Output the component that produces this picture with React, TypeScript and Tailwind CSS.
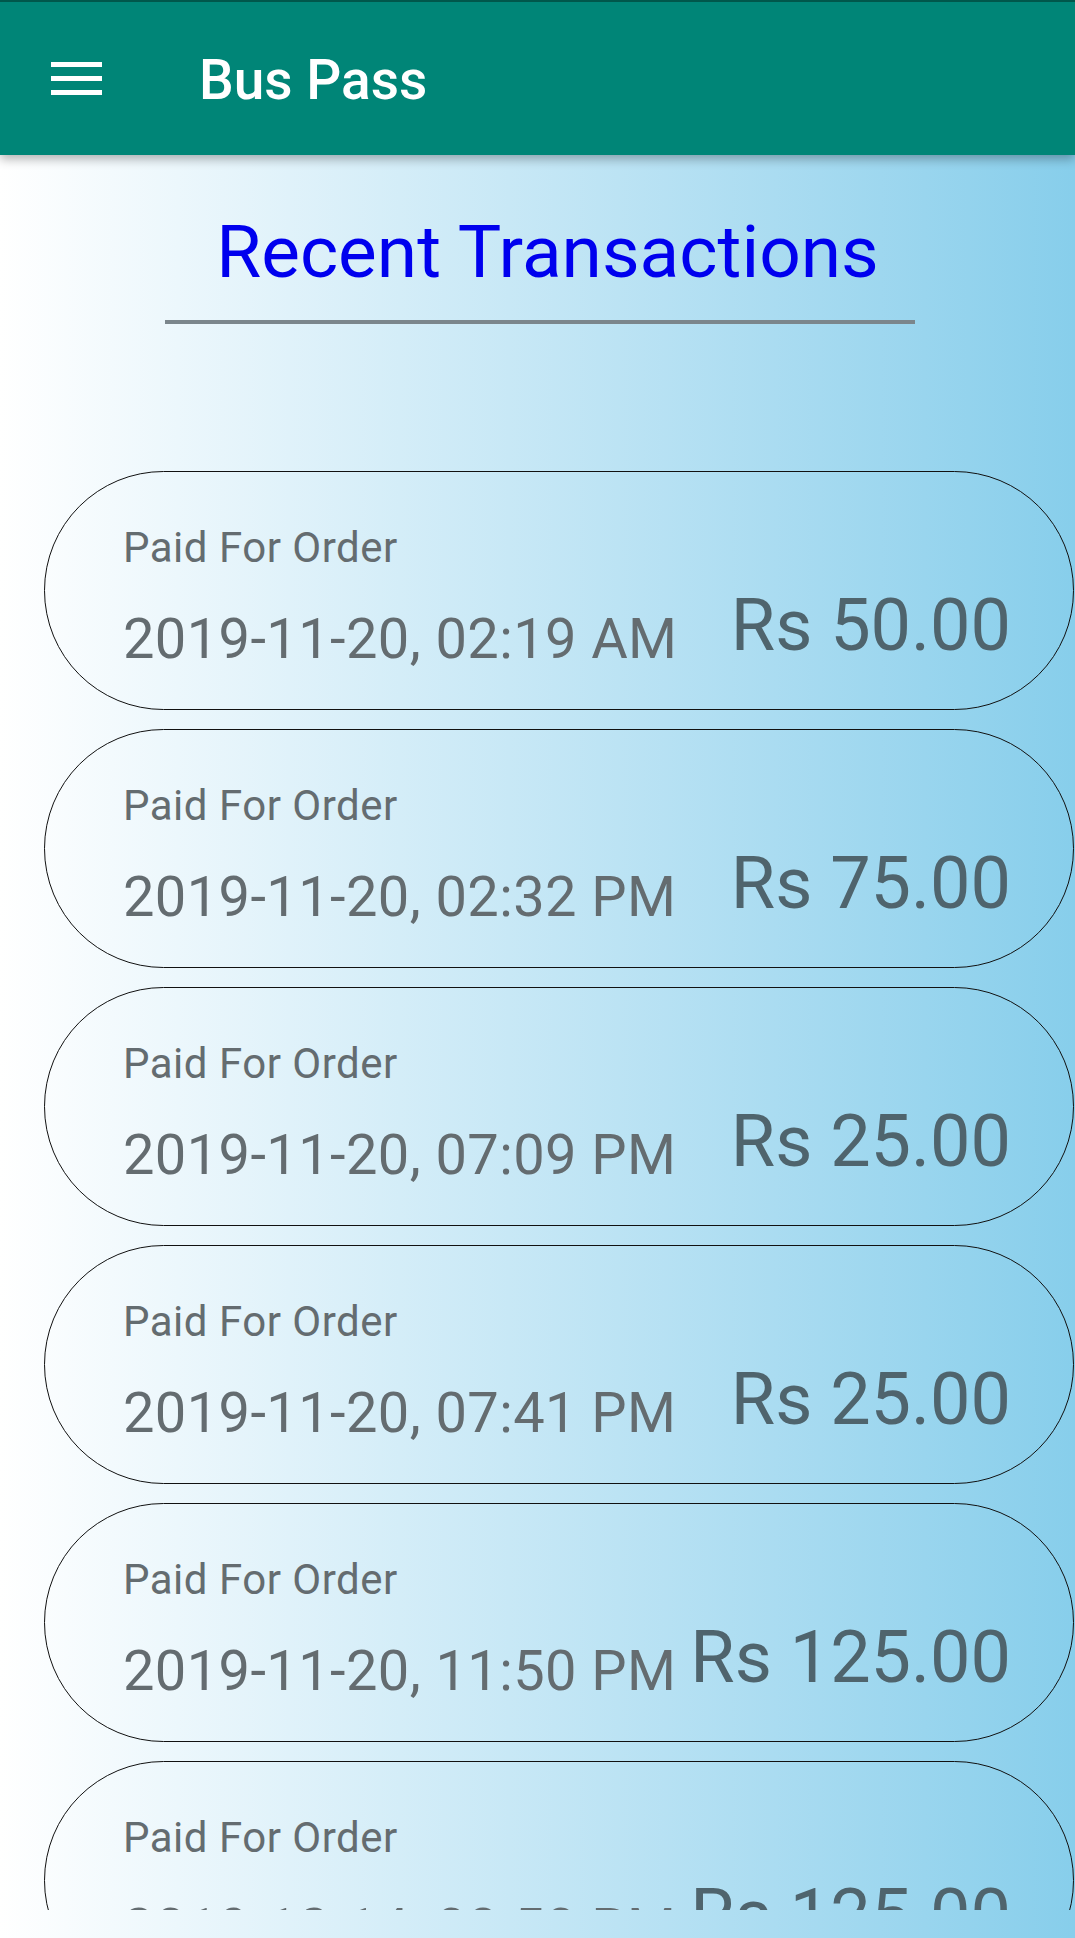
import React from 'react';

type Txn = { date: string; amount: string };

const txns: Txn[] = [
  { date: '2019-11-20, 02:19 AM', amount: 'Rs 50.00' },
  { date: '2019-11-20, 02:32 PM', amount: 'Rs 75.00' },
  { date: '2019-11-20, 07:09 PM', amount: 'Rs 25.00' },
  { date: '2019-11-20, 07:41 PM', amount: 'Rs 25.00' },
  { date: '2019-11-20, 11:50 PM', amount: 'Rs 125.00' },
  { date: '2019-12-14, 08:50 PM', amount: 'Rs 125.00' },
];

const TxnCard: React.FC<{ txn: Txn }> = ({ txn }) => (
  <div className="ml-[44px] w-[1030px] h-[239px] shrink-0 rounded-full border border-[#111] pl-[78px] pr-[62px] pt-[55px]">
    <div className="text-[42px] leading-[42px] tracking-[0.5px] text-[#646c70]">Paid For Order</div>
    <div className="mt-[21px] flex justify-between items-start">
      <div className="mt-[21px] text-[56px] leading-[56px] tracking-[0.4px] text-[#646c70] whitespace-nowrap">{txn.date}</div>
      <div className="text-[72px] leading-[72px] text-[#4f646d] whitespace-nowrap">{txn.amount}</div>
    </div>
  </div>
);

export default function App() {
  return (
    <div
      className="w-[1075px] h-[1938px] overflow-hidden bg-gradient-to-r from-white to-[#87ceeb] flex flex-col"
      style={{ fontFamily: 'Roboto, "Noto Sans", sans-serif' }}
    >
      <header className="h-[155px] shrink-0 bg-[#008577] border-t-2 border-[#00574b] shadow-[0_4px_10px_rgba(0,0,0,0.3)] flex items-center z-10">
        <div className="ml-[51px] w-[51px] flex flex-col gap-[9px] mt-[-1px]">
          <span className="block h-[5px] bg-white" />
          <span className="block h-[5px] bg-white" />
          <span className="block h-[5px] bg-white" />
        </div>
        <h1 className="ml-[97px] mt-[3px] text-[55px] leading-none font-medium text-white">Bus Pass</h1>
      </header>

      <h2 className="mt-[61px] pl-[20px] text-center text-[73px] leading-[72px] text-[#0000ee]">Recent Transactions</h2>
      <div className="mt-[32px] ml-[165px] w-[750px] h-[4px] bg-[#7b868c]" />

      <div className="mt-[147px] h-[1439px] overflow-hidden flex flex-col gap-[19px]">
        {txns.map((t, i) => (
          <TxnCard key={i} txn={t} />
        ))}
      </div>
    </div>
  );
}
